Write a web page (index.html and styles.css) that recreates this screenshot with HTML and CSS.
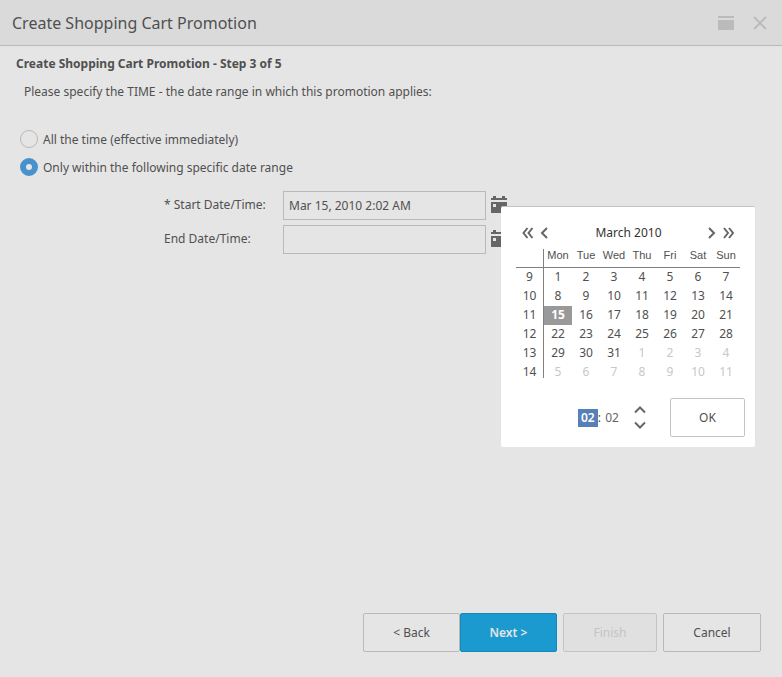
FILE: index.html
```html
<!DOCTYPE html>
<html lang="en">
<head>
<meta charset="utf-8">
<title>Create Shopping Cart Promotion</title>
<link rel="stylesheet" href="styles.css">
</head>
<body>
<header class="titlebar">
  <h1 class="title">Create Shopping Cart Promotion</h1>
  <button class="icon-button" type="button" aria-label="Maximize">
    <svg width="16" height="14" viewBox="0 0 16 14"><path d="M0 0h16v2H0zM0 4h16v10H0z" fill="currentColor"/></svg>
  </button>
  <button class="icon-button" type="button" aria-label="Close">
    <svg width="14" height="14" viewBox="0 0 14 14"><path d="M1 1l12 12M13 1L1 13" stroke="currentColor" stroke-width="2" fill="none"/></svg>
  </button>
</header>
<form class="wizard">
  <main class="content">
    <h2 class="step">Create Shopping Cart Promotion - Step 3 of 5</h2>
    <p class="hint">Please specify the TIME - the date range in which this promotion applies:</p>
    <div class="choices">
      <label class="choice"><input class="radio" type="radio" name="when">All the time (effective immediately)</label>
      <label class="choice"><input class="radio" type="radio" name="when" checked>Only within the following specific date range</label>
    </div>
    <div class="dates">
      <div class="date-row">
        <label class="date-label" for="start">* Start Date/Time:</label>
        <input class="date-input" id="start" type="text" value="Mar 15, 2010 2:02 AM">
        <button class="calendar-button" type="button" aria-label="Choose start date">
          <svg width="16" height="18" viewBox="0 0 16 18"><path d="M0 2h2V0h3v2h6V0h3v2h2v2H0z" fill="#666"/><path fill-rule="evenodd" d="M0 6h16v10.500q0 .5-.5.500H.5Q0 17 0 16.500zM2 8v3h3V8z" fill="#666"/></svg>
        </button>
        <section class="picker" aria-label="Calendar">
          <div class="picker-head">
            <button class="nav" type="button" aria-label="Previous year"><svg width="12" height="12" viewBox="0 0 12 12"><path d="M5.500 1L1.500 6l4 5M10.500 1l-4 5 4 5"/></svg></button>
            <button class="nav" type="button" aria-label="Previous month"><svg width="12" height="12" viewBox="0 0 12 12"><path d="M8 1L3 6l5 5"/></svg></button>
            <span class="month">March 2010</span>
            <button class="nav" type="button" aria-label="Next month"><svg width="12" height="12" viewBox="0 0 12 12"><path d="M3 1l5 5-5 5"/></svg></button>
            <button class="nav" type="button" aria-label="Next year"><svg width="12" height="12" viewBox="0 0 12 12"><path d="M1 1l4 5-4 5M6 1l4 5-4 5"/></svg></button>
          </div>
          <table class="days">
            <thead><tr><th></th><th>Mon</th><th>Tue</th><th>Wed</th><th>Thu</th><th>Fri</th><th>Sat</th><th>Sun</th></tr></thead>
            <tbody>
              <tr><th>9</th><td>1</td><td>2</td><td>3</td><td>4</td><td>5</td><td>6</td><td>7</td></tr>
              <tr><th>10</th><td>8</td><td>9</td><td>10</td><td>11</td><td>12</td><td>13</td><td>14</td></tr>
              <tr><th>11</th><td class="selected">15</td><td>16</td><td>17</td><td>18</td><td>19</td><td>20</td><td>21</td></tr>
              <tr><th>12</th><td>22</td><td>23</td><td>24</td><td>25</td><td>26</td><td>27</td><td>28</td></tr>
              <tr><th>13</th><td>29</td><td>30</td><td>31</td><td class="other">1</td><td class="other">2</td><td class="other">3</td><td class="other">4</td></tr>
              <tr><th>14</th><td class="other">5</td><td class="other">6</td><td class="other">7</td><td class="other">8</td><td class="other">9</td><td class="other">10</td><td class="other">11</td></tr>
            </tbody>
          </table>
          <div class="picker-foot">
            <div class="time">
              <input class="time-part active" type="text" value="02" aria-label="Hour"><span>:</span><input class="time-part" type="text" value="02" aria-label="Minute">
            </div>
            <div class="spinner">
              <button class="spin" type="button" aria-label="Increase"><svg width="12" height="8" viewBox="0 0 12 8"><path d="M1 6.500l5-5 5 5"/></svg></button>
              <button class="spin" type="button" aria-label="Decrease"><svg width="12" height="8" viewBox="0 0 12 8"><path d="M1 1.500l5 5 5-5"/></svg></button>
            </div>
            <button class="button ok" type="button">OK</button>
          </div>
        </section>
      </div>
      <div class="date-row">
        <label class="date-label" for="end">End Date/Time:</label>
        <input class="date-input" id="end" type="text">
        <button class="calendar-button" type="button" aria-label="Choose end date">
          <svg width="16" height="18" viewBox="0 0 16 18"><path d="M0 2h2V0h3v2h6V0h3v2h2v2H0z" fill="#666"/><path fill-rule="evenodd" d="M0 6h16v10.500q0 .5-.5.500H.5Q0 17 0 16.500zM2 8v3h3V8z" fill="#666"/></svg>
        </button>
      </div>
    </div>
  </main>
  <footer class="actions">
    <div class="pair">
      <button class="button back" type="button">&lt; Back</button>
      <button class="button next" type="button">Next &gt;</button>
    </div>
    <button class="button finish" type="button" disabled>Finish</button>
    <button class="button cancel" type="button">Cancel</button>
  </footer>
</form>
</body>
</html>
```
FILE: styles.css
```css
* { box-sizing: border-box; }
body {
  margin: 0;
  min-height: 100vh;
  display: flex;
  flex-direction: column;
  background: #e5e5e5;
  color: #505050;
  font: 12px/16px "Noto Sans", "Open Sans", sans-serif;
}
button, input { font: inherit; color: inherit; }
button { padding: 0; border: 0; background: none; }
svg { display: block; }

.titlebar {
  display: flex;
  align-items: center;
  gap: 19px;
  height: 46px;
  padding: 0 15px 0 12px;
  background: #dadada;
  border-bottom: 1px solid #b9b9b9;
}
.title { flex: 1; margin: 0; font-size: 16px; line-height: 24px; font-weight: 400; }
.icon-button { color: #bbb; }

.wizard { flex: 1; display: flex; flex-direction: column; }
.content { flex: 1; padding: 10px 16px; }
.step { margin: 0; font-size: 12px; line-height: 16px; font-weight: 700; }
.hint { margin: 12px 8px 0; }

.choices { display: flex; flex-direction: column; gap: 8px; padding: 30px 4px 0; }
.choice { display: flex; align-items: center; gap: 5px; height: 20px; }
.radio {
  appearance: none;
  width: 18px;
  height: 18px;
  margin: 0 0 2px;
  border: 1px solid #b9b9b9;
  border-radius: 50%;
}
.radio:checked { border: 6px solid #4791cc; }

.dates { display: flex; flex-direction: column; gap: 5px; padding: 13px 0 0 148px; }
.date-row { position: relative; display: flex; align-items: center; }
.date-label { width: 119px; padding-bottom: 2px; }
.date-input {
  width: 203px;
  height: 29px;
  padding: 0 5px;
  border: 1px solid #b9b9b9;
  background: transparent;
}
.calendar-button { margin: 0 0 2px 5px; }

.picker {
  position: absolute;
  z-index: 1;
  top: 15px;
  left: 337px;
  width: 254px;
  padding: 15px 10px 10px 15px;
  background: #fff;
  border-top: 1px solid #c4c4c4;
  border-radius: 2px;
}
.picker-head { display: flex; align-items: center; gap: 5px; height: 22px; padding: 0 10px 0 6px; }
.month { flex: 1; text-align: center; color: #333; }
.nav svg, .spin svg { fill: none; stroke: #666; stroke-width: 2; }

.days { table-layout: fixed; width: 224px; margin-top: 5px; border-collapse: separate; border-spacing: 0; text-align: center; }
.days th, .days td { padding: 2px 0 4px; line-height: 13px; font-weight: 400; }
.days th:first-child { border-right: 1px solid #808080; }
.days thead th { padding: 0 0 5px; border-bottom: 1px solid #808080; font-family: "Liberation Sans", Arial, sans-serif; font-size: 11px; }
.days tbody tr:last-child > * { padding-bottom: 0; }
.days .selected { background: #999; color: #fff; font-weight: 700; }
.days .other { color: #c8c8c8; }

.picker-foot { display: flex; align-items: center; justify-content: flex-end; margin-top: 20px; }
.time { display: flex; align-items: center; }
.time-part { width: 20px; height: 18px; padding: 0; border: 0; background: none; text-align: center; color: #666; }
.time-part.active { background: #5580b8; color: #fff; font-weight: 600; }
.time span + .time-part { margin-left: 1px; }
.spinner { display: flex; flex-direction: column; gap: 7px; margin: 0 24px 0 12px; }

.button { height: 39px; border: 1px solid #b9b9b9; border-radius: 2px; text-align: center; }
.ok { width: 75px; border-color: #c4c4c4; }
.actions { display: flex; justify-content: flex-end; gap: 6px; padding: 0 21px 25px; }
.pair { display: flex; }
.back, .next { width: 97px; }
.next { background: #1b9ad0; border-color: #1586ba; color: #e5e5e5; font-weight: 600; }
.finish { width: 94px; background: #e0e0e0; border-color: #c4c4c4; color: #c4c4c4; }
.cancel { width: 98px; }
```
